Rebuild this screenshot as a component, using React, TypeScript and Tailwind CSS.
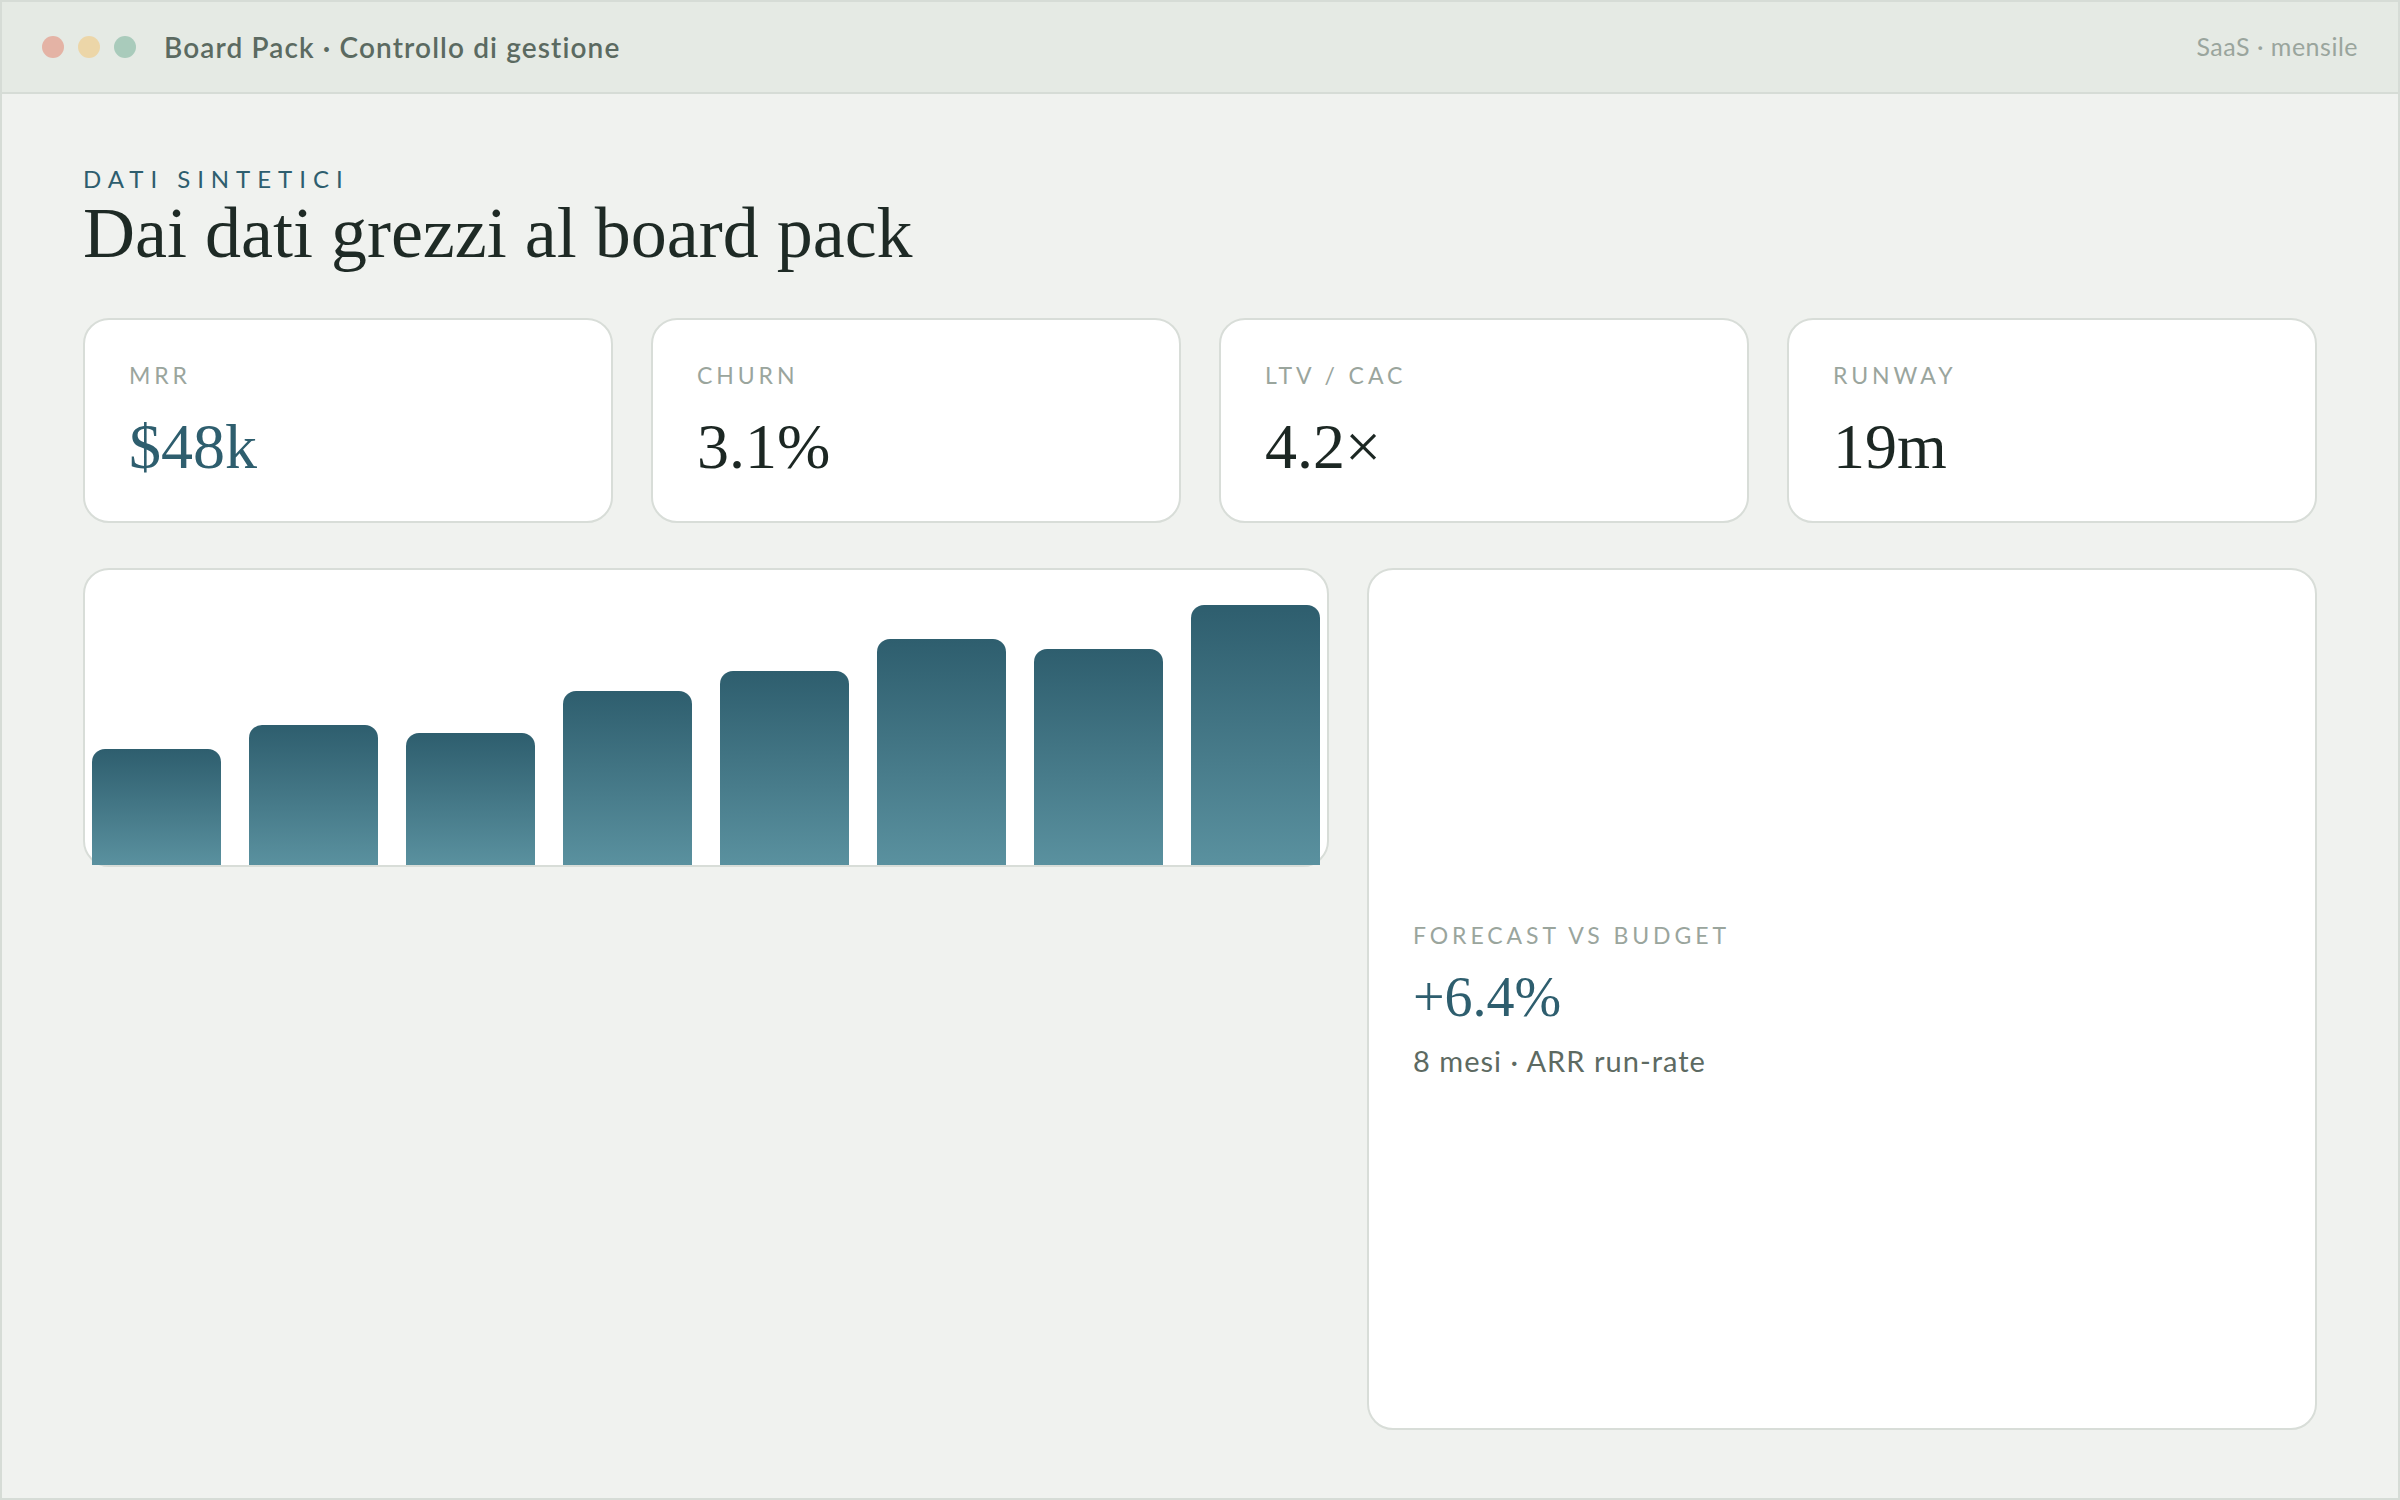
import React from 'react';

type Kpi = {
  label: string;
  value: string;
  accent?: boolean;
};

const kpis: Kpi[] = [
  { label: 'MRR', value: '$48k', accent: true },
  { label: 'Churn', value: '3.1%' },
  { label: 'LTV / CAC', value: '4.2×' },
  { label: 'Runway', value: '19m' },
];

// altezze in px, lette dal grafico (8 mesi)
const bars = [116, 140, 132, 174, 194, 226, 216, 260];

const sans = "font-['Lato','Noto_Sans',sans-serif]";
const serif = "font-['Liberation_Serif','Times_New_Roman',serif]";

const KpiCard: React.FC<{ kpi: Kpi }> = ({ kpi }) => (
  <div className="h-[205px] rounded-[26px] border-2 border-[#d8ddd8] bg-white px-[44px] pt-[41px]">
    <p className={`${sans} text-[23px] leading-[28px] uppercase tracking-[0.17em] text-[#9aa59d]`}>
      {kpi.label}
    </p>
    <p
      className={`${serif} mt-[26px] text-[64px] leading-[64px] ${
        kpi.accent ? 'text-[#2e5e6e]' : 'text-[#1c2723]'
      }`}
    >
      {kpi.value}
    </p>
  </div>
);

export default function App() {
  return (
    <div className={`${sans} flex h-[1500px] w-full flex-col border-2 border-[#d6dcd6] bg-[#f0f2ef]`}>
      <header className="flex h-[92px] shrink-0 items-center justify-between border-b-2 border-[#d6dcd6] bg-[#e5eae4] pl-[40px] pr-[40px]">
        <div className="flex items-center">
          <div className="flex items-center gap-[14px]">
            <span className="h-[22px] w-[22px] rounded-full bg-[#e4b3a5]" />
            <span className="h-[22px] w-[22px] rounded-full bg-[#ecd6a8]" />
            <span className="h-[22px] w-[22px] rounded-full bg-[#a9cbbb]" />
          </div>
          <span className="ml-[28px] text-[28px] font-semibold tracking-[0.04em] text-[#5b6a61]">
            Board Pack · Controllo di gestione
          </span>
        </div>
        <span className="text-[25px] tracking-[0.02em] text-[#9aa59d]">SaaS · mensile</span>
      </header>

      <main className="flex-1 px-[81px] pt-[70px]">
        <p className="text-[24px] leading-[29px] uppercase tracking-[0.29em] text-[#2e5e6e]">
          Dati sintetici
        </p>
        <h1 className={`${serif} mt-[4px] text-[72px] leading-[72px] text-[#1e2a25]`}>
          Dai dati grezzi al board pack
        </h1>

        <div className="mt-[49px] grid grid-cols-4 gap-[38px]">
          {kpis.map((k) => (
            <KpiCard key={k.label} kpi={k} />
          ))}
        </div>

        <div className="mt-[45px] grid grid-cols-[1246fr_950fr] items-start gap-[38px]">
          <div className="flex h-[299px] items-end gap-[28px] rounded-[26px] border-2 border-[#d8ddd8] bg-white px-[7px]">
            {bars.map((h, i) => (
              <div
                key={i}
                className="flex-1 rounded-t-[13px] bg-linear-to-b from-[#2e5e6e] to-[#5a919f]"
                style={{ height: h }}
              />
            ))}
          </div>

          <div className="flex h-[862px] flex-col justify-center rounded-[26px] border-2 border-[#d8ddd8] bg-white px-[44px]">
            <p className="text-[23px] leading-[28px] uppercase tracking-[0.17em] text-[#9aa59d]">
              Forecast vs budget
            </p>
            <p className={`${serif} mt-[19px] text-[56px] leading-[58px] text-[#2e5e6e]`}>+6.4%</p>
            <p className="mt-[18px] text-[29px] leading-[34px] tracking-[0.035em] text-[#5d6a62]">
              8 mesi · ARR run-rate
            </p>
          </div>
        </div>
      </main>
    </div>
  );
}
